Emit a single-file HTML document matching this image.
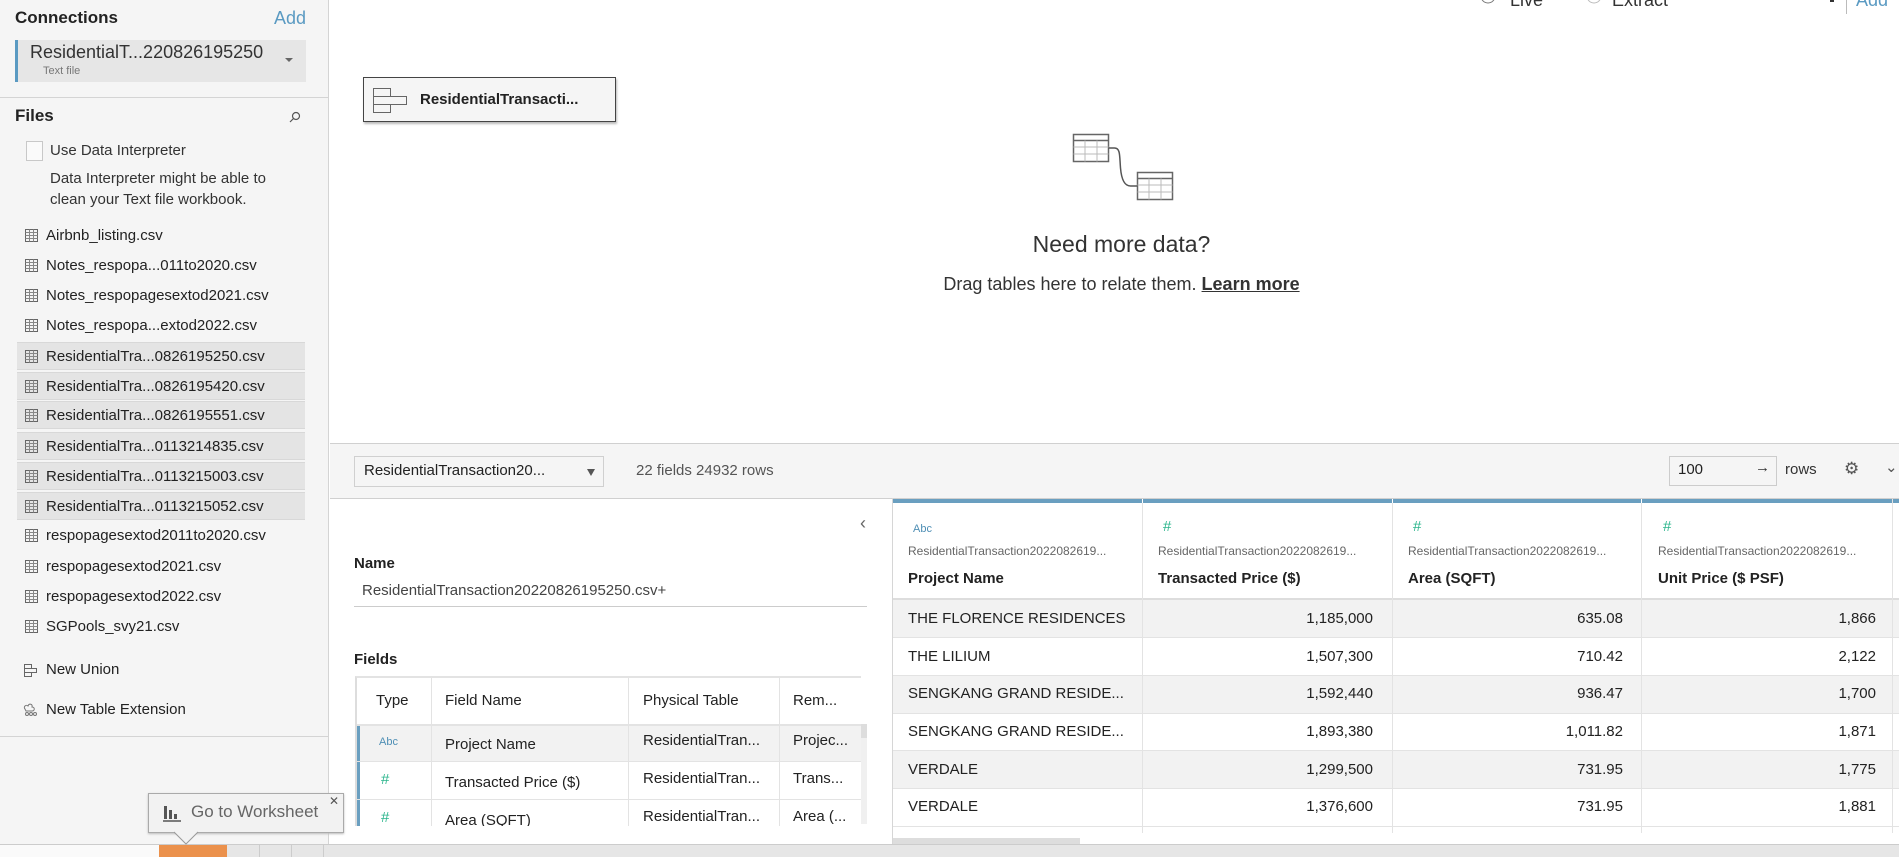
<!DOCTYPE html>
<html><head><meta charset="utf-8"><style>
*{margin:0;padding:0;box-sizing:border-box}
body{width:1899px;height:857px;overflow:hidden;position:relative;background:#fff;font-family:"Liberation Sans",sans-serif;color:#333}
.a{position:absolute;white-space:nowrap}
.fi{position:absolute;left:17px;width:288px;height:28px;font-size:15px;color:#222}
.fi span{position:absolute;left:29px;top:5px}
.fi svg{position:absolute;left:8px;top:7px}
.hl{background:#e4e4e4;border-top:1px solid #d8d8d8;border-bottom:1px solid #d8d8d8}
.gl{position:absolute;background:#e3e3e3}
.cell{position:absolute;font-size:15px;color:#222}
</style></head><body>
<!-- left panel -->
<div class="a" style="left:0;top:0;width:329px;height:845px;background:#f5f5f5;border-right:1px solid #d4d4d4"></div>
<div class="a" style="left:15px;top:8px;font-size:17px;font-weight:bold;color:#222">Connections</div>
<div class="a" style="left:274px;top:8px;font-size:18px;color:#5a9ac2">Add</div>
<div class="a" style="left:15px;top:40px;width:291px;height:42px;background:#e6e6e6;border-left:3px solid #5a9ac2"></div>
<div class="a" style="left:30px;top:42px;font-size:18px;color:#333">ResidentialT...220826195250</div>
<div class="a" style="left:43px;top:65px;font-size:11px;color:#777">Text file</div>
<div class="a" style="left:285px;top:58px;width:0;height:0;border-left:4px solid transparent;border-right:4px solid transparent;border-top:4px solid #666"></div>
<div class="a" style="left:0;top:97px;width:328px;height:1px;background:#d4d4d4"></div>
<div class="a" style="left:15px;top:106px;font-size:17px;font-weight:bold;color:#222">Files</div>
<svg class="a" style="left:289px;top:111px" width="12" height="12"><circle cx="7" cy="5" r="3.5" fill="none" stroke="#555" stroke-width="1.2"/><line x1="4.5" y1="7.5" x2="1" y2="11" stroke="#555" stroke-width="1.2"/></svg>
<div class="a" style="left:26px;top:141px;width:17px;height:20px;border:1px solid #c8c8c8;background:#fafafa"></div>
<div class="a" style="left:50px;top:142px;font-size:15px;color:#333">Use Data Interpreter</div>
<div class="a" style="left:50px;top:168px;font-size:15px;color:#333;line-height:21px">Data Interpreter might be able to<br>clean your Text file workbook.</div>

<svg width="0" height="0" style="position:absolute"><defs><g id="tb"><rect x="0.5" y="0.5" width="12" height="12" fill="none" stroke="#666"/><path d="M0.5 3.5h12M0.5 6.5h12M0.5 9.5h12M4.5 0.5v12M8.5 0.5v12" stroke="#888" stroke-width="1"/></g></defs></svg>

<div class="fi" style="top:222px"><svg width="13" height="13"><use href="#tb"/></svg><span>Airbnb_listing.csv</span></div>
<div class="fi" style="top:252px"><svg width="13" height="13"><use href="#tb"/></svg><span>Notes_respopa...011to2020.csv</span></div>
<div class="fi" style="top:282px"><svg width="13" height="13"><use href="#tb"/></svg><span>Notes_respopagesextod2021.csv</span></div>
<div class="fi" style="top:312px"><svg width="13" height="13"><use href="#tb"/></svg><span>Notes_respopa...extod2022.csv</span></div>
<div class="fi hl" style="top:342px"><svg width="13" height="13"><use href="#tb"/></svg><span>ResidentialTra...0826195250.csv</span></div>
<div class="fi hl" style="top:372px"><svg width="13" height="13"><use href="#tb"/></svg><span>ResidentialTra...0826195420.csv</span></div>
<div class="fi hl" style="top:401px"><svg width="13" height="13"><use href="#tb"/></svg><span>ResidentialTra...0826195551.csv</span></div>
<div class="fi hl" style="top:432px"><svg width="13" height="13"><use href="#tb"/></svg><span>ResidentialTra...0113214835.csv</span></div>
<div class="fi hl" style="top:462px"><svg width="13" height="13"><use href="#tb"/></svg><span>ResidentialTra...0113215003.csv</span></div>
<div class="fi hl" style="top:492px"><svg width="13" height="13"><use href="#tb"/></svg><span>ResidentialTra...0113215052.csv</span></div>
<div class="fi" style="top:522px"><svg width="13" height="13"><use href="#tb"/></svg><span>respopagesextod2011to2020.csv</span></div>
<div class="fi" style="top:553px"><svg width="13" height="13"><use href="#tb"/></svg><span>respopagesextod2021.csv</span></div>
<div class="fi" style="top:583px"><svg width="13" height="13"><use href="#tb"/></svg><span>respopagesextod2022.csv</span></div>
<div class="fi" style="top:613px"><svg width="13" height="13"><use href="#tb"/></svg><span>SGPools_svy21.csv</span></div>
<svg class="a" style="left:24px;top:664px" width="14" height="14"><path d="M0.5 0.5h7v4h-7zM0.5 4.5h12v4h-12zM0.5 8.5h7v4h-7z" fill="none" stroke="#666"/></svg>
<div class="a" style="left:46px;top:661px;font-size:15px;color:#222">New Union</div>
<svg class="a" style="left:23px;top:703px" width="16" height="14"><path d="M2 6c-2-2 1-5 3-3 1-3 5-2 4 1 3 0 3 4 0 4H3z" fill="none" stroke="#777"/><circle cx="4" cy="11" r="1.5" fill="none" stroke="#777"/><circle cx="8" cy="11" r="1.5" fill="none" stroke="#777"/><circle cx="12" cy="11" r="1.5" fill="none" stroke="#777"/></svg>
<div class="a" style="left:46px;top:701px;font-size:15px;color:#222">New Table Extension</div>
<div class="a" style="left:0;top:736px;width:328px;height:1px;background:#d4d4d4"></div>

<!-- top canvas -->
<svg class="a" style="left:1480px;top:-8px" width="20" height="14"><circle cx="8" cy="4" r="7" fill="#fff" stroke="#777"/></svg>
<div class="a" style="left:1510px;top:-10px;font-size:18px;color:#333">Live</div>
<svg class="a" style="left:1586px;top:-8px" width="20" height="14"><circle cx="8" cy="4" r="7" fill="#fff" stroke="#bbb"/></svg>
<div class="a" style="left:1612px;top:-10px;font-size:18px;color:#333">Extract</div>
<div class="a" style="left:1830px;top:-2px;width:4px;height:4px;background:#333"></div>
<div class="a" style="left:1846px;top:0;width:1px;height:14px;background:#bbb"></div>
<div class="a" style="left:1856px;top:-10px;font-size:18px;color:#5a9ac2">Add</div>

<div class="a" style="left:363px;top:77px;width:253px;height:45px;background:#f5f5f5;border:1px solid #444;box-shadow:1px 2px 2px #bbb"></div>
<svg class="a" style="left:373px;top:88px" width="36" height="26"><path d="M0.5 0.5h17v8h-17zM0.5 8.5h33v8h-33zM0.5 16.5h17v8h-17z" fill="none" stroke="#666"/></svg>
<div class="a" style="left:420px;top:91px;font-size:15px;font-weight:bold;color:#222">ResidentialTransacti...</div>

<svg class="a" style="left:1070px;top:130px" width="110" height="75">
<rect x="3.5" y="4.5" width="35" height="27" fill="#fff" stroke="#666" stroke-width="1.5"/>
<path d="M3.5 10.5h35" stroke="#666" stroke-width="1.5"/><path d="M3.5 17h35M3.5 24h35M15 10.5v21M27 10.5v21" stroke="#bbb"/>
<rect x="67.5" y="42.5" width="35" height="27" fill="#fff" stroke="#666" stroke-width="1.5"/>
<path d="M67.5 48.5h35" stroke="#666" stroke-width="1.5"/><path d="M67.5 55h35M67.5 62h35M79 48.5v21M91 48.5v21" stroke="#bbb"/>
<path d="M38.5 18h6c6 0 5 8 6 20s4 18 10 18h7" fill="none" stroke="#555" stroke-width="1.5"/>
</svg>
<div class="a" style="left:0;width:2243px;top:231px;text-align:center;font-size:23px;color:#333">Need more data?</div>
<div class="a" style="left:0;width:2243px;top:274px;text-align:center;font-size:18px;color:#333">Drag tables here to relate them. <b style="text-decoration:underline;color:#333">Learn more</b></div>

<!-- toolbar -->
<div class="a" style="left:330px;top:443px;width:1569px;height:56px;background:#f5f5f5;border-top:1px solid #d0d0d0;border-bottom:1px solid #d0d0d0"></div>
<div class="a" style="left:354px;top:456px;width:250px;height:31px;background:#f5f5f5;border:1px solid #d0d0d0"></div>
<div class="a" style="left:364px;top:462px;font-size:15px;color:#222">ResidentialTransaction20...</div>
<div class="a" style="left:587px;top:469px;border-left:4px solid transparent;border-right:4px solid transparent;border-top:7px solid #555"></div>
<div class="a" style="left:636px;top:462px;font-size:15px;color:#555">22 fields 24932 rows</div>
<div class="a" style="left:1669px;top:456px;width:108px;height:30px;background:#f5f5f5;border:1px solid #ccc"></div>
<div class="a" style="left:1678px;top:461px;font-size:15px;color:#222">100</div>
<div class="a" style="left:1755px;top:459px;font-size:15px;color:#333">→</div>
<div class="a" style="left:1785px;top:461px;font-size:15px;color:#333">rows</div>
<div class="a" style="left:1844px;top:459px;font-size:17px;color:#555">⚙</div>
<div class="a" style="left:1885px;top:458px;font-size:15px;color:#555">⌄</div>

<!-- metadata panel -->
<div class="a" style="left:860px;top:513px;font-size:18px;color:#666">‹</div>
<div class="a" style="left:354px;top:555px;font-size:15px;font-weight:bold;color:#222">Name</div>
<div class="a" style="left:362px;top:582px;font-size:15px;color:#444">ResidentialTransaction20220826195250.csv+</div>
<div class="a" style="left:354px;top:606px;width:513px;height:1px;background:#ccc"></div>
<div class="a" style="left:354px;top:651px;font-size:15px;font-weight:bold;color:#222">Fields</div>
<div class="a" style="left:355px;top:676px;width:506px;height:150px;border-left:2px solid #ddd;border-top:2px solid #e3e3e3;overflow:hidden">
 <div class="a" style="left:0;top:46px;width:506px;height:37px;background:#f2f2f2;border-left:3px solid #6a9fc0"></div>
 <div class="a" style="left:0;top:84px;width:506px;height:37px;border-left:3px solid #6a9fc0"></div>
 <div class="a" style="left:0;top:122px;width:506px;height:37px;border-left:3px solid #6a9fc0"></div>
 <div class="gl" style="left:0;top:46px;width:506px;height:2px"></div>
 <div class="gl" style="left:0;top:83px;width:506px;height:1px"></div>
 <div class="gl" style="left:0;top:121px;width:506px;height:1px"></div>
 <div class="gl" style="left:74px;top:0;width:1px;height:150px"></div>
 <div class="gl" style="left:271px;top:0;width:1px;height:150px"></div>
 <div class="gl" style="left:422px;top:0;width:1px;height:150px"></div>
 <div class="gl" style="left:504px;top:0;width:1px;height:150px"></div>
 <div class="cell" style="left:19px;top:14px">Type</div>
 <div class="cell" style="left:88px;top:14px">Field Name</div>
 <div class="cell" style="left:286px;top:14px">Physical Table</div>
 <div class="cell" style="left:436px;top:14px">Rem...</div>
 <div class="cell" style="left:22px;top:58px;font-size:11px;color:#4f8fb5">Abc</div>
 <div class="cell" style="left:88px;top:58px">Project Name</div>
 <div class="cell" style="left:286px;top:54px">ResidentialTran...</div>
 <div class="cell" style="left:436px;top:54px">Projec...</div>
 <div class="cell" style="left:24px;top:93px;color:#2bb58c">#</div>
 <div class="cell" style="left:88px;top:96px">Transacted Price ($)</div>
 <div class="cell" style="left:286px;top:92px">ResidentialTran...</div>
 <div class="cell" style="left:436px;top:92px">Trans...</div>
 <div class="cell" style="left:24px;top:131px;color:#2bb58c">#</div>
 <div class="cell" style="left:88px;top:134px">Area (SQFT)</div>
 <div class="cell" style="left:286px;top:130px">ResidentialTran...</div>
 <div class="cell" style="left:436px;top:130px">Area (...</div>
</div>
<div class="a" style="left:861px;top:724px;width:6px;height:100px;background:#f0f0f0"></div>
<div class="a" style="left:861px;top:724px;width:6px;height:14px;background:#ddd"></div>

<!-- grid -->
<div class="a" style="left:892px;top:498px;width:1px;height:346px;background:#d6d6d6"></div>
<div class="a" style="left:893px;top:499px;width:1006px;height:4px;background:#6a9fc0"></div>
<div class="a" style="left:893px;top:598px;width:1006px;height:2px;background:#ddd"></div>
<div class="a" style="left:893px;top:600px;width:1006px;height:38px;background:#f2f2f2"></div>
<div class="a" style="left:893px;top:675px;width:1006px;height:38px;background:#f2f2f2"></div>
<div class="a" style="left:893px;top:751px;width:1006px;height:38px;background:#f2f2f2"></div>
<div class="gl" style="left:893px;top:637px;width:1006px;height:1px"></div>
<div class="gl" style="left:893px;top:675px;width:1006px;height:1px"></div>
<div class="gl" style="left:893px;top:713px;width:1006px;height:1px"></div>
<div class="gl" style="left:893px;top:750px;width:1006px;height:1px"></div>
<div class="gl" style="left:893px;top:788px;width:1006px;height:1px"></div>
<div class="gl" style="left:893px;top:826px;width:1006px;height:1px"></div>
<div class="gl" style="left:1142px;top:499px;width:1px;height:334px"></div>
<div class="gl" style="left:1392px;top:499px;width:1px;height:334px"></div>
<div class="gl" style="left:1641px;top:499px;width:1px;height:334px"></div>
<div class="gl" style="left:1892px;top:499px;width:1px;height:334px"></div>
<div class="a" style="left:1142px;top:499px;width:1px;height:4px;background:#fff"></div>
<div class="a" style="left:1392px;top:499px;width:1px;height:4px;background:#fff"></div>
<div class="a" style="left:1641px;top:499px;width:1px;height:4px;background:#fff"></div>

<div class="cell" style="left:913px;top:523px;font-size:11px;color:#4f8fb5">Abc</div>
<div class="cell" style="left:1163px;top:518px;color:#2bb58c">#</div>
<div class="cell" style="left:1413px;top:518px;color:#2bb58c">#</div>
<div class="cell" style="left:1663px;top:518px;color:#2bb58c">#</div>
<div class="cell" style="left:908px;top:544px;font-size:12px;color:#666">ResidentialTransaction2022082619...</div>
<div class="cell" style="left:1158px;top:544px;font-size:12px;color:#666">ResidentialTransaction2022082619...</div>
<div class="cell" style="left:1408px;top:544px;font-size:12px;color:#666">ResidentialTransaction2022082619...</div>
<div class="cell" style="left:1658px;top:544px;font-size:12px;color:#666">ResidentialTransaction2022082619...</div>
<div class="cell" style="left:908px;top:570px;font-weight:bold">Project Name</div>
<div class="cell" style="left:1158px;top:570px;font-weight:bold">Transacted Price ($)</div>
<div class="cell" style="left:1408px;top:570px;font-weight:bold">Area (SQFT)</div>
<div class="cell" style="left:1658px;top:570px;font-weight:bold">Unit Price ($ PSF)</div>

<div class="cell" style="left:908px;top:610px">THE FLORENCE RESIDENCES</div>
<div class="cell" style="left:908px;top:648px">THE LILIUM</div>
<div class="cell" style="left:908px;top:685px">SENGKANG GRAND RESIDE...</div>
<div class="cell" style="left:908px;top:723px">SENGKANG GRAND RESIDE...</div>
<div class="cell" style="left:908px;top:761px">VERDALE</div>
<div class="cell" style="left:908px;top:798px">VERDALE</div>
<div class="cell" style="right:526px;top:610px">1,185,000</div>
<div class="cell" style="right:526px;top:648px">1,507,300</div>
<div class="cell" style="right:526px;top:685px">1,592,440</div>
<div class="cell" style="right:526px;top:723px">1,893,380</div>
<div class="cell" style="right:526px;top:761px">1,299,500</div>
<div class="cell" style="right:526px;top:798px">1,376,600</div>
<div class="cell" style="right:276px;top:610px">635.08</div>
<div class="cell" style="right:276px;top:648px">710.42</div>
<div class="cell" style="right:276px;top:685px">936.47</div>
<div class="cell" style="right:276px;top:723px">1,011.82</div>
<div class="cell" style="right:276px;top:761px">731.95</div>
<div class="cell" style="right:276px;top:798px">731.95</div>
<div class="cell" style="right:23px;top:610px">1,866</div>
<div class="cell" style="right:23px;top:648px">2,122</div>
<div class="cell" style="right:23px;top:685px">1,700</div>
<div class="cell" style="right:23px;top:723px">1,871</div>
<div class="cell" style="right:23px;top:761px">1,775</div>
<div class="cell" style="right:23px;top:798px">1,881</div>
<div class="a" style="left:893px;top:838px;width:187px;height:6px;background:#ddd"></div>

<!-- bottom bar -->
<div class="a" style="left:0;top:844px;width:1899px;height:13px;background:#e6e6e6;border-top:1px solid #ccc"></div>
<div class="a" style="left:0;top:845px;width:159px;height:12px;background:#fafafa"></div>
<div class="a" style="left:159px;top:845px;width:68px;height:12px;background:#eb914c"></div>
<div class="a" style="left:259px;top:845px;width:1px;height:12px;background:#ccc"></div>
<div class="a" style="left:291px;top:845px;width:1px;height:12px;background:#ccc"></div>
<div class="a" style="left:323px;top:845px;width:1px;height:12px;background:#ccc"></div>

<!-- tooltip -->
<div class="a" style="left:148px;top:793px;width:196px;height:40px;background:#f2f2f2;border:1px solid #aaa;box-shadow:0 1px 2px #bbb"></div>
<svg class="a" style="left:174px;top:831px" width="26" height="14"><path d="M0 1 L12 13 L24 1" fill="#f2f2f2" stroke="#999"/></svg>
<svg class="a" style="left:162px;top:804px" width="20" height="18"><path d="M1 17h18" stroke="#555" stroke-width="1.5"/><rect x="2" y="2" width="3" height="13" fill="#555"/><rect x="7" y="6" width="3" height="9" fill="#555"/><rect x="12" y="10" width="3" height="5" fill="#555"/></svg>
<div class="a" style="left:191px;top:802px;font-size:17px;color:#666">Go to Worksheet</div>
<div class="a" style="left:329px;top:794px;font-size:12px;color:#555">✕</div>
</body></html>
